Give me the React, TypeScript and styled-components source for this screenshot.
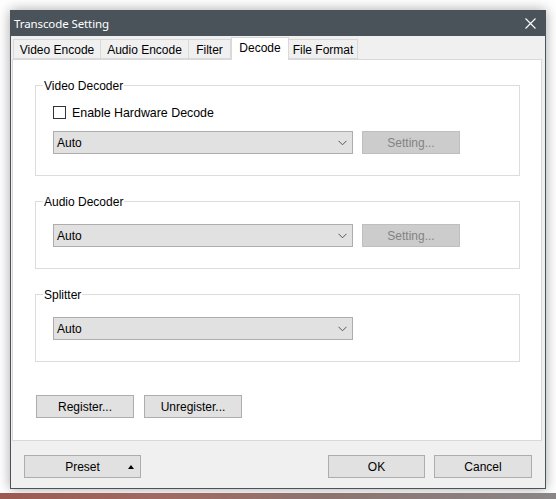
import React from "react";
import styled, { createGlobalStyle } from "styled-components";

const GlobalStyle = createGlobalStyle`
  html, body { margin: 0; padding: 0; background: #ffffff; }
  body { font-family: "Liberation Sans", Arial, sans-serif; font-size: 12px; color: #000; }
  * { box-sizing: border-box; }
`;

const Page = styled.div`
  width: 556px;
  height: 499px;
  overflow: hidden;
  display: flex;
  flex-direction: column;
  background: #ffffff;
`;

const Window = styled.div`
  margin: 10px 0 0 10px;
  width: 536px;
  height: 479px;
  border: 1px solid #4b535a;
  box-shadow: 0 0 12px rgba(0, 0, 0, 0.35);
  display: flex;
  flex-direction: column;
  background: #f0f0f0;
`;

const Desktop = styled.div`
  margin-top: 4px;
  height: 6px;
  width: 556px;
  background: linear-gradient(90deg, #9b5a52 0%, #a06a62 30%, #8c7470 60%, #8a8688 100%);
`;

const TitleBar = styled.div`
  height: 25px;
  background: #4b535a;
  display: flex;
  align-items: center;
  justify-content: space-between;
  padding: 0 9px 0 3px;
  color: #ffffff;
`;

const TitleText = styled.span`
  font-family: "Noto Sans", "Open Sans", sans-serif;
  font-size: 11.5px;
  letter-spacing: -0.1px;
`;

const Body = styled.div`
  flex: 1;
  display: flex;
  flex-direction: column;
  padding: 1px 3px 0 1px;
`;

const TabRow = styled.div`
  display: flex;
  align-items: flex-end;
  height: 22px;
  padding-left: 1px;
`;

const Tab = styled.div<{ $w: number; $active?: boolean; $first?: boolean }>`
  width: ${(p) => p.$w}px;
  height: ${(p) => (p.$active ? 23 : 20)}px;
  margin-bottom: ${(p) => (p.$active ? -1 : 0)}px;
  background: ${(p) => (p.$active ? "#ffffff" : "#f0f0f0")};
  border: 1px solid #d9d9d9;
  border-bottom: ${(p) => (p.$active ? "none" : "1px solid #d9d9d9")};
  border-left: ${(p) => (p.$first || p.$active ? "1px solid #d9d9d9" : "none")};
  display: flex;
  align-items: center;
  justify-content: center;
  padding-top: ${(p) => (p.$active ? 0 : 1)}px;
  padding-bottom: ${(p) => (p.$active ? 3 : 0)}px;
  position: relative;
  z-index: ${(p) => (p.$active ? 1 : 0)};
  white-space: nowrap;
`;

const Panel = styled.div`
  height: 382px;
  background: #ffffff;
  border: 1px solid #d9d9d9;
  padding: 25px 21px 0 22px;
  display: flex;
  flex-direction: column;
  gap: 25px;
`;

const Group = styled.div<{ $top: number }>`
  position: relative;
  border: 1px solid #dcdcdc;
  padding: ${(p) => p.$top}px 17px 21px;
  display: flex;
  flex-direction: column;
  gap: 12px;
`;

const GroupLabel = styled.span`
  position: absolute;
  top: -7px;
  left: 7px;
  background: #ffffff;
  padding: 0 1px;
  line-height: 14px;
  font-size: 12px;
`;

const CheckRow = styled.label`
  display: flex;
  align-items: center;
  gap: 6px;
  height: 13px;
  font-size: 12.4px;
`;

const CheckBox = styled.span`
  width: 13px;
  height: 13px;
  border: 1px solid #333333;
  background: #ffffff;
  flex: none;
`;

const Row = styled.div`
  display: flex;
  align-items: center;
  gap: 9px;
`;

const Combo = styled.div`
  width: 300px;
  height: 23px;
  background: #e1e1e1;
  border: 1px solid #adadad;
  display: flex;
  align-items: center;
  justify-content: space-between;
  padding: 0 5px 0 3px;
`;

const Button = styled.div<{ $w: number; $disabled?: boolean }>`
  position: relative;
  width: ${(p) => p.$w}px;
  height: 23px;
  background: ${(p) => (p.$disabled ? "#cccccc" : "#e1e1e1")};
  border: 1px solid ${(p) => (p.$disabled ? "#bfbfbf" : "#adadad")};
  color: ${(p) => (p.$disabled ? "#838383" : "#000000")};
  display: flex;
  align-items: center;
  justify-content: center;
  flex: none;
`;

const ButtonRow = styled.div`
  display: flex;
  gap: 10px;
  margin-top: 8px;
  margin-left: 1px;
`;

const Arrow = styled.span`
  position: absolute;
  right: 6px;
  top: 9px;
  width: 0;
  height: 0;
  border-left: 3.5px solid transparent;
  border-right: 3.5px solid transparent;
  border-bottom: 4px solid #000;
`;

const Footer = styled.div`
  flex: 1;
  display: flex;
  align-items: flex-start;
  padding: 14px 10px 0 12px;
`;

const Spacer = styled.div`
  flex: 1;
`;

const FooterRight = styled.div`
  display: flex;
  gap: 9px;
`;

const Chevron = () => (
  <svg width="9" height="6" viewBox="0 0 9 6">
    <polyline points="0.5,0.8 4.5,4.8 8.5,0.8" fill="none" stroke="#555" strokeWidth="1" />
  </svg>
);

const CloseIcon = () => (
  <svg width="11" height="11" viewBox="0 0 11 11">
    <path d="M0.5 0.5 L10.5 10.5 M10.5 0.5 L0.5 10.5" stroke="#fff" strokeWidth="1.1" />
  </svg>
);

const tabs = [
  { label: "Video Encode", w: 88 },
  { label: "Audio Encode", w: 88 },
  { label: "Filter", w: 42 },
  { label: "Decode", w: 58, active: true },
  { label: "File Format", w: 69 },
];

const DropDown = ({ value }: { value: string }) => (
  <Combo>
    <span>{value}</span>
    <Chevron />
  </Combo>
);

export default function App() {
  return (
    <>
      <GlobalStyle />
      <Page>
        <Window>
          <TitleBar>
            <TitleText>Transcode Setting</TitleText>
            <CloseIcon />
          </TitleBar>
          <Body>
            <TabRow>
              {tabs.map((t, i) => (
                <Tab key={t.label} $w={t.w} $active={t.active} $first={i === 0}>
                  {t.label}
                </Tab>
              ))}
            </TabRow>
            <Panel>
              <Group $top={20}>
                <GroupLabel>Video Decoder</GroupLabel>
                <CheckRow>
                  <CheckBox />
                  Enable Hardware Decode
                </CheckRow>
                <Row>
                  <DropDown value="Auto" />
                  <Button $w={98} $disabled>Setting...</Button>
                </Row>
              </Group>
              <Group $top={22}>
                <GroupLabel>Audio Decoder</GroupLabel>
                <Row>
                  <DropDown value="Auto" />
                  <Button $w={98} $disabled>Setting...</Button>
                </Row>
              </Group>
              <Group $top={22}>
                <GroupLabel>Splitter</GroupLabel>
                <Row>
                  <DropDown value="Auto" />
                </Row>
              </Group>
              <ButtonRow>
                <Button $w={98}>Register...</Button>
                <Button $w={98}>Unregister...</Button>
              </ButtonRow>
            </Panel>
            <Footer>
              <Button $w={117}>
                Preset
                <Arrow />
              </Button>
              <Spacer />
              <FooterRight>
                <Button $w={97}>OK</Button>
                <Button $w={98}>Cancel</Button>
              </FooterRight>
            </Footer>
          </Body>
        </Window>
        <Desktop />
      </Page>
    </>
  );
}
